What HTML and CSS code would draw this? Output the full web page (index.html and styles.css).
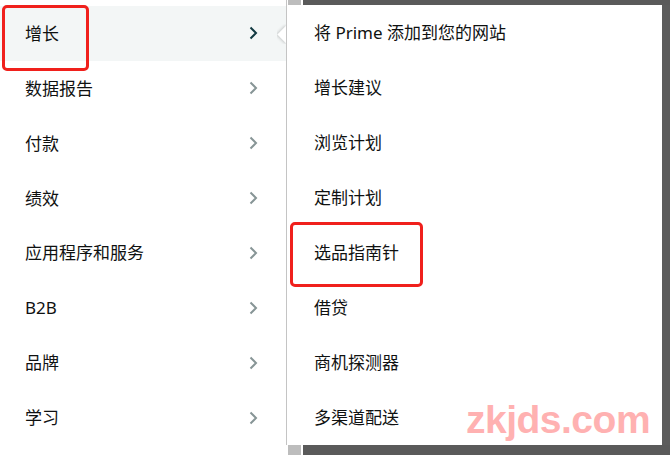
FILE: index.html
```html
<!DOCTYPE html>
<html lang="zh-CN">
<head>
<meta charset="utf-8">
<title>菜单</title>
<link rel="stylesheet" href="styles.css">
</head>
<body>
<div class="page">
  <nav class="menu">
    <div class="item active marked">
      <span>增长</span>
      <svg class="chev" viewBox="0 0 9 14" width="9" height="14"><path d="M1.5 1.5 L7 7 L1.5 12.5" fill="none" stroke="currentColor" stroke-width="2"/></svg>
      <div class="pointer"><div class="pointer-sq"></div></div>
    </div>
    <div class="item"><span>数据报告</span><svg class="chev" viewBox="0 0 9 14" width="9" height="14"><path d="M1.5 1.5 L7 7 L1.5 12.5" fill="none" stroke="currentColor" stroke-width="2"/></svg></div>
    <div class="item"><span>付款</span><svg class="chev" viewBox="0 0 9 14" width="9" height="14"><path d="M1.5 1.5 L7 7 L1.5 12.5" fill="none" stroke="currentColor" stroke-width="2"/></svg></div>
    <div class="item"><span>绩效</span><svg class="chev" viewBox="0 0 9 14" width="9" height="14"><path d="M1.5 1.5 L7 7 L1.5 12.5" fill="none" stroke="currentColor" stroke-width="2"/></svg></div>
    <div class="item"><span>应用程序和服务</span><svg class="chev" viewBox="0 0 9 14" width="9" height="14"><path d="M1.5 1.5 L7 7 L1.5 12.5" fill="none" stroke="currentColor" stroke-width="2"/></svg></div>
    <div class="item"><span>B2B</span><svg class="chev" viewBox="0 0 9 14" width="9" height="14"><path d="M1.5 1.5 L7 7 L1.5 12.5" fill="none" stroke="currentColor" stroke-width="2"/></svg></div>
    <div class="item"><span>品牌</span><svg class="chev" viewBox="0 0 9 14" width="9" height="14"><path d="M1.5 1.5 L7 7 L1.5 12.5" fill="none" stroke="currentColor" stroke-width="2"/></svg></div>
    <div class="item"><span>学习</span><svg class="chev" viewBox="0 0 9 14" width="9" height="14"><path d="M1.5 1.5 L7 7 L1.5 12.5" fill="none" stroke="currentColor" stroke-width="2"/></svg></div>
  </nav>
  <section class="side">
    <div class="strip strip-top"><i class="nub"></i><i class="dark"></i></div>
    <div class="middle">
      <ul class="sub">
        <li class="sub-item">将 Prime 添加到您的网站</li>
        <li class="sub-item">增长建议</li>
        <li class="sub-item">浏览计划</li>
        <li class="sub-item">定制计划</li>
        <li class="sub-item marked2">选品指南针</li>
        <li class="sub-item">借贷</li>
        <li class="sub-item">商机探测器</li>
        <li class="sub-item">多渠道配送</li>
      </ul>
      <div class="edge"></div>
    </div>
    <div class="strip strip-bottom"><i class="nub"></i><i class="dark"></i></div>
  </section>
  <div class="watermark">zkjds.com</div>
</div>
</body>
</html>
```
FILE: styles.css
```css
* { box-sizing: border-box; }
html, body { margin: 0; padding: 0; }
body {
  width: 670px;
  height: 455px;
  overflow: hidden;
  background: #fff;
  font-family: "Noto Sans", "Noto Sans CJK SC", sans-serif;
  color: #0f1111;
}
.page {
  position: relative;
  display: flex;
  height: 455px;
}
.menu {
  width: 287px;
  height: 445px;
  padding-top: 6px;
  border-right: 1px solid #c4c4c4;
  display: flex;
  flex-direction: column;
  position: relative;
  z-index: 2;
}
.item {
  position: relative;
  height: 55px;
  display: flex;
  align-items: center;
  justify-content: space-between;
  padding: 0 28px 0 25px;
  font-size: 17px;
}
.item span { line-height: 1; }
.item .chev { color: #879596; }
.item.active { background: #f3f6f6; }
.item.active .chev { color: #123a42; }
.pointer {
  position: absolute;
  left: 277px;
  top: 18px;
  width: 9px;
  height: 20px;
  overflow: hidden;
}
.pointer-sq {
  position: absolute;
  left: 2.5px;
  top: 3.5px;
  width: 13px;
  height: 13px;
  background: #fff;
  transform: rotate(45deg);
  box-shadow: -1px 1px 3px rgba(0,0,0,0.18);
}
.marked::after {
  content: "";
  position: absolute;
  left: 2px;
  top: -1px;
  width: 81px;
  height: 60px;
  border: 3px solid #f0201c;
  border-radius: 5px;
}
.side {
  flex: 1;
  margin-left: 1px;
  display: flex;
  flex-direction: column;
}
.strip { display: flex; }
.strip-top { height: 5px; }
.strip-bottom { height: 10px; }
.nub { width: 13px; background: #bdbdbd; margin-right: 2px; }
.dark { flex: 1; background: #5a5a5a; }
.middle { flex: 1; display: flex; }
.sub {
  flex: 1;
  list-style: none;
  margin: 0;
  padding: 0;
}
.edge { width: 8px; background: #5c5c5c; }
.sub-item {
  position: relative;
  height: 55px;
  display: flex;
  align-items: center;
  padding-left: 26px;
  font-size: 17px;
  line-height: 1;
}
.marked2::after {
  content: "";
  position: absolute;
  left: 2px;
  top: -3px;
  width: 127px;
  height: 59px;
  border: 3px solid #f0201c;
  border-radius: 5px;
}
.watermark {
  position: absolute;
  left: 466px;
  top: 397px;
  font-family: "Liberation Sans", sans-serif;
  font-weight: bold;
  font-size: 39px;
  line-height: 46px;
  color: #ffb1b1;
  letter-spacing: -0.5px;
  z-index: 3;
}
```
